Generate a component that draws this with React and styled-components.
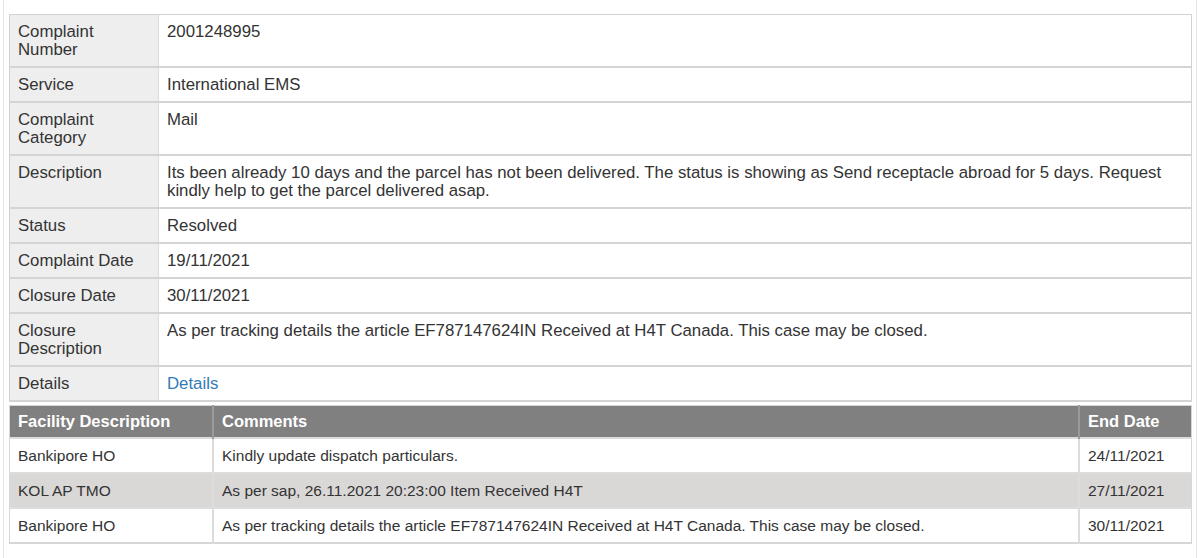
import styled, { createGlobalStyle } from "styled-components";

const GlobalStyle = createGlobalStyle`
  body {
    margin: 0;
    background: #fff;
    font-family: "Liberation Sans", Arial, sans-serif;
    color: #333;
  }
`;

const Panel = styled.div`
  margin: 0 3px;
  min-height: 558px;
  box-sizing: border-box;
  border-left: 1px solid #e3e3e3;
  border-right: 1px solid #e3e3e3;
  padding: 14px 4px 14px 5px;
`;

const InfoTable = styled.table`
  width: 100%;
  border-collapse: collapse;
  border: 1px solid #d2d2d2;
  font-size: 16.8px;
  line-height: 18px;

  tr {
    border-bottom: 2px solid #d4d4d4;
  }
`;

const Label = styled.th`
  width: 132px;
  text-align: left;
  font-weight: normal;
  vertical-align: top;
  padding: 8px 8px 7px;
  background: #eeeeee;
  border-right: 1px solid #dcdcdc;
`;

const Value = styled.td`
  vertical-align: top;
  padding: 8px 8px 7px;
`;

const Link = styled.a`
  color: #337ab7;
  text-decoration: none;
`;

const TrackTable = styled.table`
  width: 100%;
  margin-top: 3px;
  border-collapse: collapse;
  border: 1px solid #d6d6d6;
  border-bottom-width: 2px;
  font-size: 15.5px;
  line-height: 17px;
`;

const Head = styled.th`
  background: #808080;
  color: #fff;
  font-size: 16.5px;
  line-height: 18px;
  font-weight: bold;
  text-align: left;
  padding: 6px 8px 7px;
  border-right: 2px solid #9a9a9a;
  width: ${(p) => p.$w || "auto"};
  &:last-child {
    border-right: none;
  }
`;

const Row = styled.tr`
  background: ${(p) => (p.$shaded ? "#dad7d7" : "#fff")};
  border-top: 2px solid #dcdcdc;
`;

const Cell = styled.td`
  padding: 8px;
  border-right: 2px solid #dcdcdc;
  &:last-child {
    border-right: none;
  }
`;

const info = [
  ["Complaint Number", "2001248995"],
  ["Service", "International EMS"],
  ["Complaint Category", "Mail"],
  [
    "Description",
    "Its been already 10 days and the parcel has not been delivered. The status is showing as Send receptacle abroad for 5 days. Request kindly help to get the parcel delivered asap.",
  ],
  ["Status", "Resolved"],
  ["Complaint Date", "19/11/2021"],
  ["Closure Date", "30/11/2021"],
  [
    "Closure Description",
    "As per tracking details the article EF787147624IN Received at H4T Canada. This case may be closed.",
  ],
];

const tracking = [
  ["Bankipore HO", "Kindly update dispatch particulars.", "24/11/2021"],
  ["KOL AP TMO", "As per sap, 26.11.2021 20:23:00 Item Received H4T", "27/11/2021"],
  [
    "Bankipore HO",
    "As per tracking details the article EF787147624IN Received at H4T Canada. This case may be closed.",
    "30/11/2021",
  ],
];

export default function App() {
  return (
    <>
      <GlobalStyle />
      <Panel>
        <InfoTable>
          <tbody>
            {info.map(([k, v]) => (
              <tr key={k}>
                <Label>{k}</Label>
                <Value>{v}</Value>
              </tr>
            ))}
            <tr>
              <Label>Details</Label>
              <Value>
                <Link href="#">Details</Link>
              </Value>
            </tr>
          </tbody>
        </InfoTable>
        <TrackTable>
          <thead>
            <tr>
              <Head $w="186px">Facility Description</Head>
              <Head>Comments</Head>
              <Head $w="95px">End Date</Head>
            </tr>
          </thead>
          <tbody>
            {tracking.map((r, i) => (
              <Row key={i} $shaded={i % 2 === 1}>
                <Cell>{r[0]}</Cell>
                <Cell>{r[1]}</Cell>
                <Cell>{r[2]}</Cell>
              </Row>
            ))}
          </tbody>
        </TrackTable>
      </Panel>
    </>
  );
}
